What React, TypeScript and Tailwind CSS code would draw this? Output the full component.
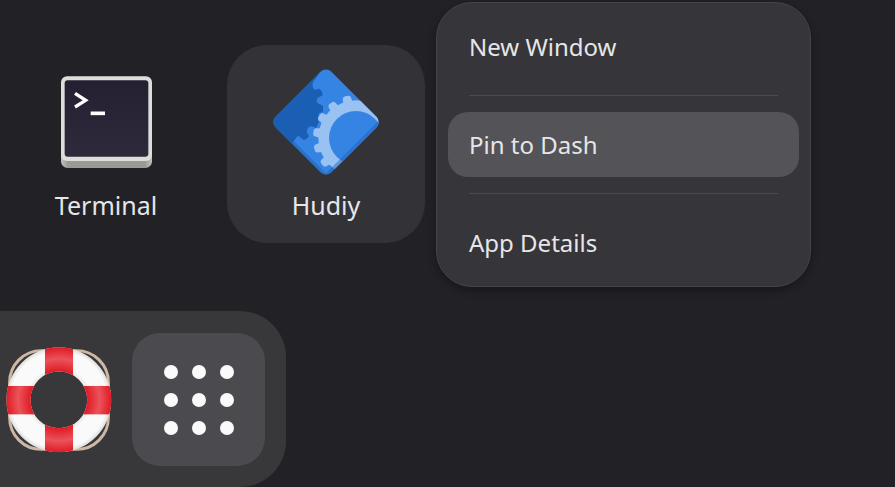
import React from 'react'

interface AppTileProps {
  label: string
  icon: React.ReactNode
  /** Highlights the tile, e.g. while its context menu is open */
  active?: boolean
}

const App: React.FC = () => {
  return (
    <main className="min-h-screen bg-[#222126] font-['Noto_Sans',sans-serif] text-2xl text-[#e6e6e8]">
      <div className="flex items-start pt-0.5 pl-[7px]">
        <div className="mt-[43px] flex gap-[22px]">
          <AppTile label="Terminal" icon={<TerminalIcon />} />
          <AppTile label="Hudiy" icon={<HudiyIcon />} active />
        </div>
        <ContextMenu />
      </div>
      <Dock />
    </main>
  )
}

const AppTile: React.FC<AppTileProps> = ({ label, icon, active }) => (
  <button
    type="button"
    className={`flex h-[198px] w-[198px] flex-col items-center rounded-[40px] pt-6 ${active ? 'bg-[#333237]' : ''}`}
  >
    {icon}
    <span className="mt-3 text-[25px] leading-9">{label}</span>
  </button>
)

/** Popup menu for the selected application */
const ContextMenu: React.FC = () => (
  <div
    role="menu"
    className="ml-[11px] flex w-[375px] flex-col rounded-[36px] border border-[#454449] bg-[#363539] p-[11px] shadow-[0_3px_8px_rgba(0,0,0,0.35)]"
  >
    <MenuItem label="New Window" />
    <MenuSeparator />
    <MenuItem label="Pin to Dash" active />
    <MenuSeparator />
    <MenuItem label="App Details" />
  </div>
)

const MenuItem: React.FC<{ label: string; active?: boolean }> = ({ label, active }) => (
  <button
    type="button"
    role="menuitem"
    className={`h-[65px] rounded-[20px] px-[21px] text-left ${active ? 'bg-[#545358]' : ''}`}
  >
    {label}
  </button>
)

const MenuSeparator: React.FC = () => <div role="separator" className="mx-[21px] my-4 h-px bg-[#4b4a4e]" />

const Dock: React.FC = () => (
  <nav
    aria-label="Dash"
    className="mt-6 flex w-fit items-center gap-5 rounded-r-[46px] bg-[#38383a] pt-[22px] pr-[21px] pb-[21px] pl-1.5"
  >
    <button type="button" aria-label="Help">
      <LifebuoyIcon />
    </button>
    <button
      type="button"
      aria-label="Show Apps"
      className="flex h-[133px] w-[133px] items-center justify-center rounded-[28px] bg-[#4b4a4e]"
    >
      <span className="grid grid-cols-3 gap-3.5">
        {Array.from({ length: 9 }, (_, i) => (
          <span key={i} className="size-3.5 rounded-full bg-[#fafafa]" />
        ))}
      </span>
    </button>
  </nav>
)

const TerminalIcon: React.FC = () => (
  <svg viewBox="38 28 318 318" className="size-[106px]" aria-hidden="true">
    <defs>
      <linearGradient id="term-base" x1="0" x2="1" y1="0" y2="0">
        <stop offset="0" stopColor="#c4c2be" />
        <stop offset="0.08" stopColor="#9a9996" />
        <stop offset="0.92" stopColor="#9a9996" />
        <stop offset="1" stopColor="#c4c2be" />
      </linearGradient>
      <linearGradient id="term-screen" x1="0" x2="0" y1="0" y2="1">
        <stop offset="0" stopColor="#241f31" />
        <stop offset="1" stopColor="#2f2a3b" />
      </linearGradient>
    </defs>
    <rect x="62" y="70" width="273" height="255" rx="20" fill="url(#term-base)" />
    <rect x="62" y="50" width="273" height="254" rx="18" fill="#deddda" />
    <rect x="73" y="62" width="251" height="229" rx="9" fill="url(#term-screen)" />
    <path d="M104 101 L136 122 L104 142" fill="none" stroke="#fff" strokeWidth="10" />
    <path d="M151 161 H194" stroke="#fff" strokeWidth="11" />
  </svg>
)

// Teeth angles in degrees, clockwise from the positive x axis
const GEAR_TEETH = [142, 165, 188, 211, 234, 257]

const HudiyIcon: React.FC = () => (
  <svg viewBox="36 28 318 318" className="size-[106px]" aria-hidden="true">
    <defs>
      <clipPath id="hudiy-diamond">
        <rect x="77" y="69" width="236" height="236" rx="22" transform="rotate(45 195 187)" />
      </clipPath>
    </defs>
    <g clipPath="url(#hudiy-diamond)">
      <rect x="30" y="20" width="330" height="330" fill="#3584e4" />
      <path
        d="M20 20 H190 L156 68 Q152 76 158 88 Q162 92 174 87 Q182 90 185 104 Q185 110 170 114 Q165 122 169 130 Q182 136 186 140 V156 Q170 161 172 168 L177 180 L165 205 Q155 197 144 201 Q137 208 137 216 L144 230 Q136 241 128 241 L113 229 Q108 229 100 242 L60 290 L20 250 Z"
        fill="#1a5fb4"
      />
      <g fill="#99c1f1">
        {GEAR_TEETH.map((angle) => (
          <path
            key={angle}
            d="M383 219 L409 223 Q414 225 414 230 V240 Q414 245 409 247 L383 251 Z"
            transform={`rotate(${angle} 285 235)`}
          />
        ))}
        <circle cx="285" cy="235" r="113" />
      </g>
      <circle cx="285" cy="235" r="81" fill="#3584e4" />
      <path d="M366 170 L195 341 L24 170 V190 L195 361 L366 190 Z" fill="#1a5fb4" opacity="0.45" />
    </g>
  </svg>
)

const LifebuoyIcon: React.FC = () => (
  <svg viewBox="16 32 321 321" className="size-[106px]" aria-hidden="true">
    <defs>
      <radialGradient id="buoy-red" gradientUnits="userSpaceOnUse" cx="176" cy="192" r="159">
        <stop offset="0.54" stopColor="#e01b24" />
        <stop offset="0.78" stopColor="#ea535b" />
        <stop offset="1" stopColor="#e01b24" />
      </radialGradient>
      <radialGradient id="buoy-white" gradientUnits="userSpaceOnUse" cx="176" cy="192" r="159">
        <stop offset="0.54" stopColor="#e8e7e5" />
        <stop offset="0.62" stopColor="#fafafa" />
        <stop offset="0.92" stopColor="#fafafa" />
        <stop offset="1" stopColor="#deddda" />
      </radialGradient>
      <clipPath id="buoy-ring">
        <path
          clipRule="evenodd"
          d="M176 33 A159 159 0 0 1 176 351 A159 159 0 0 1 176 33 Z M176 106 A86 86 0 0 0 176 278 A86 86 0 0 0 176 106 Z"
        />
      </clipPath>
    </defs>
    <rect x="27" y="43" width="299" height="299" rx="96" fill="none" stroke="#cdb8a6" strokeWidth="9" />
    <g clipPath="url(#buoy-ring)">
      <rect x="16" y="32" width="321" height="321" fill="url(#buoy-white)" />
      <rect x="134" y="32" width="85" height="321" fill="url(#buoy-red)" />
      <rect x="16" y="150" width="321" height="86" fill="url(#buoy-red)" />
    </g>
  </svg>
)

export default App
